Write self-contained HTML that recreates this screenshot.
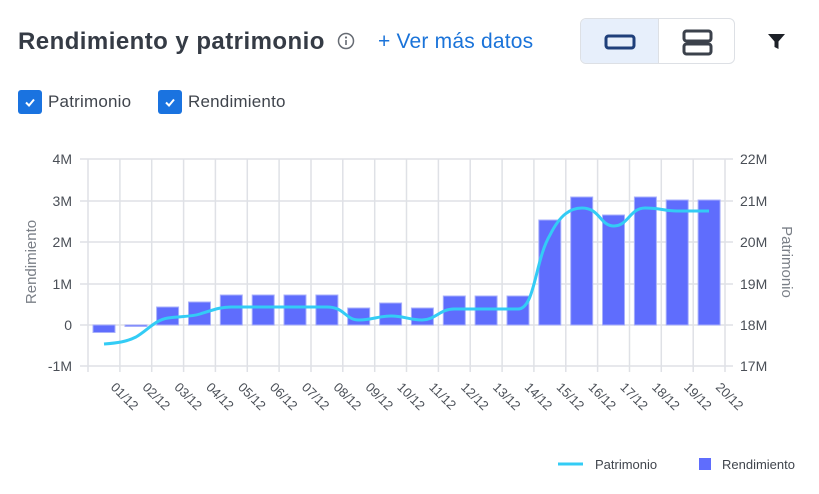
<!DOCTYPE html>
<html><head><meta charset="utf-8"><style>
body{margin:0;width:819px;height:494px;background:#fff;font-family:"Liberation Sans",sans-serif;position:relative;overflow:hidden}
.t{position:absolute;left:18px;top:28px;font-size:24px;font-weight:bold;color:#353b45;letter-spacing:0.45px}
.more{position:absolute;left:378px;top:30px;font-size:21px;color:#1a73d9;letter-spacing:0.2px}
.tg{position:absolute;left:580px;top:18px;width:155px;height:46px;border:1px solid #dde0e5;border-radius:6px;overflow:hidden;box-sizing:border-box}
.tg .a{position:absolute;left:0;top:0;width:77px;height:100%;background:#e7effb;border-right:1px solid #dde0e5}
.cb{position:absolute;top:90px;width:24px;height:24px;background:#1a73e0;border-radius:3px}
.cl{position:absolute;top:92px;font-size:17px;color:#40454d;letter-spacing:0.2px}
</style></head><body>
<div class="t">Rendimiento y patrimonio</div>
<svg style="position:absolute;left:337px;top:32px" width="20" height="20"><circle cx="9" cy="9" r="7.5" fill="none" stroke="#666b73" stroke-width="1.5"/><circle cx="9" cy="5.5" r="1.1" fill="#666b73"/><path d="M9 8v5" stroke="#666b73" stroke-width="1.6"/></svg>
<div class="more">+ Ver más datos</div>
<div class="tg"><div class="a"></div>
<svg style="position:absolute;left:22px;top:13px" width="34" height="20"><rect x="3" y="4" width="28" height="12" rx="2.5" fill="none" stroke="#1f3f7a" stroke-width="3"/></svg>
<svg style="position:absolute;left:100px;top:10px" width="34" height="28"><rect x="3" y="2" width="27" height="10" rx="2.5" fill="none" stroke="#3b414b" stroke-width="3"/><rect x="3" y="15" width="27" height="10" rx="2.5" fill="none" stroke="#3b414b" stroke-width="3"/></svg>
</div>
<svg style="position:absolute;left:767px;top:33px" width="20" height="18"><path d="M1 1h17l-6.5 7.5v7.5l-4-2v-5.5z" fill="#1d2128"/></svg>
<div class="cb" style="left:18px"><svg width="24" height="24"><path d="M8 12.5l3 3 5-6" fill="none" stroke="#fff" stroke-width="2"/></svg></div>
<div class="cl" style="left:48px">Patrimonio</div>
<div class="cb" style="left:158px"><svg width="24" height="24"><path d="M8 12.5l3 3 5-6" fill="none" stroke="#fff" stroke-width="2"/></svg></div>
<div class="cl" style="left:188px">Rendimiento</div>
<svg style="position:absolute;left:0;top:0" width="819" height="494" font-family="Liberation Sans, sans-serif">
<g stroke="#dfe1e6" stroke-width="1.5">
<path d="M80 159H733M80 201H733M80 242H733M80 284H733M80 325H733M80 366H733"/>
<path d="M88 159V372M119.9 159V372M151.7 159V372M183.6 159V372M215.4 159V372M247.3 159V372M279.1 159V372M311 159V372M342.8 159V372M374.7 159V372M406.5 159V372M438.4 159V372M470.2 159V372M502.1 159V372M533.9 159V372M565.8 159V372M597.6 159V372M629.5 159V372M661.3 159V372M693.2 159V372M725 159V372"/>
</g>
<g fill="#5f6dfd" stroke="#a8b0fb" stroke-width="1">
<rect x="93" y="325" width="22" height="7.5"/>
<rect x="125" y="325" width="22" height="1.5"/>
<rect x="156.6" y="307" width="22" height="18"/>
<rect x="188.5" y="302" width="22" height="23"/>
<rect x="220.3" y="295" width="22" height="30"/>
<rect x="252.2" y="295" width="22" height="30"/>
<rect x="284" y="295" width="22" height="30"/>
<rect x="315.9" y="295" width="22" height="30"/>
<rect x="347.7" y="308" width="22" height="17"/>
<rect x="379.6" y="303" width="22" height="22"/>
<rect x="411.4" y="308" width="22" height="17"/>
<rect x="443.3" y="296" width="22" height="29"/>
<rect x="475.1" y="296" width="22" height="29"/>
<rect x="507" y="296" width="22" height="29"/>
<rect x="538.8" y="220" width="22" height="105"/>
<rect x="570.7" y="197" width="22" height="128"/>
<rect x="602.5" y="215" width="22" height="110"/>
<rect x="634.4" y="197" width="22" height="128"/>
<rect x="666.2" y="200" width="22" height="125"/>
<rect x="698.1" y="200" width="22" height="125"/>
</g>
<path fill="none" stroke="#33ccf5" stroke-width="3" d="M104 344C117 343 126 342 136 337C148 330 155 320 168 318C182 316 190 317 200 314C213 310 220 307 231 307L327 307C345 307 345 320 359 320C372 320 378 316 391 316C404 316 410 320 422 320C435 320 440 309 454 309L518 309C535 309 535 260 550 235C560 215 570 208 582 208C600 208 600 226 614 226C628 226 630 208 645 208C660 208 665 211 677 211L709 211"/>
<g font-size="14" fill="#4a4f57" text-anchor="end">
<text x="72" y="164">4M</text><text x="72" y="206">3M</text><text x="72" y="247">2M</text><text x="72" y="289">1M</text><text x="72" y="330">0</text><text x="72" y="371">-1M</text>
</g>
<g font-size="14" fill="#4a4f57">
<text x="740" y="164">22M</text><text x="740" y="206">21M</text><text x="740" y="247">20M</text><text x="740" y="289">19M</text><text x="740" y="330">18M</text><text x="740" y="371">17M</text>
</g>
<text transform="translate(36,262) rotate(-90)" text-anchor="middle" font-size="15" fill="#7a7f87">Rendimiento</text>
<text transform="translate(782,262) rotate(90)" text-anchor="middle" font-size="15" fill="#7a7f87">Patrimonio</text>
<g font-size="13" fill="#4a4f57">
<text transform="translate(110,388) rotate(45)">01/12</text>
<text transform="translate(141.7,388) rotate(45)">02/12</text>
<text transform="translate(173.6,388) rotate(45)">03/12</text>
<text transform="translate(205.4,388) rotate(45)">04/12</text>
<text transform="translate(237.3,388) rotate(45)">05/12</text>
<text transform="translate(269.1,388) rotate(45)">06/12</text>
<text transform="translate(301,388) rotate(45)">07/12</text>
<text transform="translate(332.8,388) rotate(45)">08/12</text>
<text transform="translate(364.7,388) rotate(45)">09/12</text>
<text transform="translate(396.5,388) rotate(45)">10/12</text>
<text transform="translate(428.4,388) rotate(45)">11/12</text>
<text transform="translate(460.2,388) rotate(45)">12/12</text>
<text transform="translate(492.1,388) rotate(45)">13/12</text>
<text transform="translate(523.9,388) rotate(45)">14/12</text>
<text transform="translate(555.8,388) rotate(45)">15/12</text>
<text transform="translate(587.6,388) rotate(45)">16/12</text>
<text transform="translate(619.5,388) rotate(45)">17/12</text>
<text transform="translate(651.3,388) rotate(45)">18/12</text>
<text transform="translate(683.2,388) rotate(45)">19/12</text>
<text transform="translate(715,388) rotate(45)">20/12</text>
</g>
<path d="M558 464H583" stroke="#33ccf5" stroke-width="3"/>
<text x="595" y="469" font-size="13" fill="#40454d">Patrimonio</text>
<rect x="699" y="458" width="12" height="12" fill="#5f6dfd"/>
<text x="722" y="469" font-size="13" fill="#40454d">Rendimiento</text>
</svg>
</body></html>
